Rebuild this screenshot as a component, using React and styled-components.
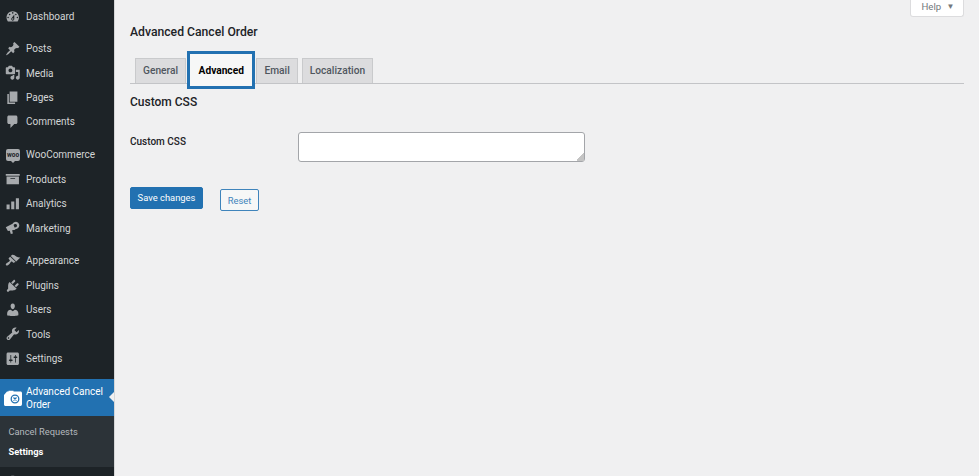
import React from 'react';
import styled, { createGlobalStyle } from 'styled-components';

const GlobalStyle = createGlobalStyle`
  html, body {
    margin: 0;
    height: 100%;
    overflow: hidden;
    background: #f0f0f1;
    font-family: Roboto, "Liberation Sans", sans-serif;
  }
`;

const icons = {
  dashboard: 'M3.76 16h12.48c1.1-1.37 1.76-3.11 1.76-5 0-4.42-3.58-8-8-8s-8 3.58-8 8c0 1.89.66 3.63 1.76 5zM10 4c.55 0 1 .45 1 1s-.45 1-1 1-1-.45-1-1 .45-1 1-1zM6 6c.55 0 1 .45 1 1s-.45 1-1 1-1-.45-1-1 .45-1 1-1zm8 0c.55 0 1 .45 1 1s-.45 1-1 1-1-.45-1-1 .45-1 1-1zm-5.37 5.55L12 7v6c0 1.1-.9 2-2 2s-2-.9-2-2c0-.57.24-1.08.63-1.45zM4 10c.55 0 1 .45 1 1s-.45 1-1 1-1-.45-1-1 .45-1 1-1zm12 0c.55 0 1 .45 1 1s-.45 1-1 1-1-.45-1-1 .45-1 1-1zm-5 3c0-.55-.45-1-1-1s-1 .45-1 1 .45 1 1 1 1-.45 1-1z',
  posts: 'M10.44 3.02l1.82-1.82 6.36 6.35-1.83 1.82c-1.05-.68-2.48-.57-3.41.36l-.75.75c-.92.93-1.04 2.35-.35 3.41l-1.83 1.82-2.41-2.41-2.8 2.79c-.42.42-3.38 2.71-3.8 2.29s1.86-3.39 2.28-3.81l2.79-2.79L4.1 9.36l1.83-1.82c1.05.69 2.48.57 3.4-.36l.75-.75c.93-.92 1.05-2.35.36-3.41z',
  media: 'M13 11V4c0-.55-.45-1-1-1h-1.67L9 1H5L3.67 3H2c-.55 0-1 .45-1 1v7c0 .55.45 1 1 1h10c.55 0 1-.45 1-1zM7 4.5c1.38 0 2.5 1.12 2.5 2.5S8.38 9.5 7 9.5 4.5 8.38 4.5 7 5.62 4.5 7 4.5zM14 6h5v10.5c0 1.38-1.12 2.5-2.5 2.5S14 17.88 14 16.5s1.12-2.5 2.5-2.5c.17 0 .34.02.5.05V9h-3V6zm-4 8.05V13h2v3.5c0 1.38-1.12 2.5-2.5 2.5S7 17.88 7 16.5 8.12 14 9.5 14c.17 0 .34.02.5.05z',
  pages: 'M6 15V2h10v13H6zm-1 1h8v2H3V5h2v11z',
  comments: 'M5 2h9c1.1 0 2 .9 2 2v7c0 1.1-.9 2-2 2h-2l-5 5v-5H5c-1.1 0-2-.9-2-2V4c0-1.1.9-2 2-2z',
  products: 'M19 4v2H1V4h18zM2 7h16v10H2V7zm11 3V9H7v1h6z',
  analytics: 'M2 11h4v6H2zM8 7h4v10H8zM14 3h4v14h-4z',
  marketing: 'M1 9.500 10.300 4.500l3.200 8-4.300.8 1 4-2.700.7-1.300-4.200-2.500.4zM11.800 3a4.500 4.500 0 1 1 3.600 8.200A4.500 4.500 0 0 1 11.800 3zm1 2.100a2.200 2.200 0 1 0 1.700 4 2.200 2.200 0 0 0-1.700-4z',
  appearance: 'M14.48 11.06L7.41 3.99l1.5-1.5c.5-.56 2.3-.47 3.51.32 1.21.8 1.43 1.28 2.91 2.1 1.18.64 2.45 1.26 4.45.85zm-.71.71L6.7 4.7 4.93 6.47c-.39.39-.39 1.02 0 1.41l1.06 1.06c.39.39.39 1.03 0 1.42-.6.6-1.43 1.11-2.21 1.69-.35.26-.7.53-1.01.84C1.43 13.23.4 14.84 1.4 15.84c.99 1 2.6-.03 3.94-1.38.31-.31.58-.66.85-1.02.57-.78 1.08-1.61 1.69-2.21.39-.39 1.02-.39 1.41 0l1.06 1.06c.39.39 1.02.39 1.41 0z',
  plugins: 'M13.11 4.36L9.87 7.6 8 5.73l3.24-3.24c.35-.34 1.05-.2 1.56.32.52.51.66 1.21.31 1.55zm-8 1.77l.91-1.12 9.01 9.01-1.19.84c-.71.71-2.63 1.16-3.82 1.16H6.14L4.9 17.26c-.59.59-1.54.59-2.12 0-.59-.58-.59-1.53 0-2.12l1.24-1.24v-3.88c0-1.13.4-3.19 1.09-3.89zm7.26 3.97l3.24-3.24c.34-.35 1.04-.21 1.55.31.52.51.66 1.21.31 1.55l-3.24 3.25z',
  users: 'M10 9.25c-2.27 0-2.73-3.44-2.73-3.44C7 4.02 7.82 2 9.97 2c2.16 0 2.98 2.02 2.71 3.81 0 0-.41 3.44-2.68 3.44zm0 2.57L12.72 10c2.39 0 4.52 2.33 4.52 4.53v2.49s-3.65 1.13-7.24 1.13c-3.65 0-7.24-1.13-7.24-1.13v-2.49c0-2.25 1.94-4.48 4.47-4.48z',
  tools: 'M16.68 9.77c-1.34 1.34-3.3 1.67-4.95.99l-5.41 6.52c-.99.99-2.59.99-3.58 0s-.99-2.59 0-3.57l6.52-5.42c-.68-1.65-.35-3.61.99-4.95 1.28-1.28 3.12-1.62 4.72-1.06l-2.89 2.89 2.82 2.82 2.86-2.87c.53 1.58.18 3.39-1.08 4.65zM3.81 16.21c.4.39 1.04.39 1.43 0 .4-.4.4-1.04 0-1.43-.39-.4-1.03-.4-1.43 0-.39.39-.39 1.03 0 1.43z',
  settings: 'M18 16V4c0-1.1-.9-2-2-2H4c-1.1 0-2 .9-2 2v12c0 1.1.9 2 2 2h12c1.1 0 2-.9 2-2zM8 11h1c.55 0 1 .45 1 1s-.45 1-1 1H8v1.5c0 .28-.22.5-.5.5s-.5-.22-.5-.5V13H6c-.55 0-1-.45-1-1s.45-1 1-1h1V5.5c0-.28.22-.5.5-.5s.5.22.5.5V11zm5-2h-1c-.55 0-1-.45-1-1s.45-1 1-1h1V5.5c0-.28.22-.5.5-.5s.5.22.5.5V7h1c.55 0 1 .45 1 1s-.45 1-1 1h-1v5.5c0 .28-.22.5-.5.5s-.5-.22-.5-.5V9z',
  collapse: 'M10 2.160c4.330 0 7.840 3.510 7.840 7.840s-3.510 7.840-7.840 7.840S2.160 14.330 2.160 10 5.670 2.160 10 2.160zM14 5l-8 5 8 5V5z',
};

const menuGroups = [
  [{ label: 'Dashboard', icon: 'dashboard' }],
  [
    { label: 'Posts', icon: 'posts' },
    { label: 'Media', icon: 'media' },
    { label: 'Pages', icon: 'pages' },
    { label: 'Comments', icon: 'comments' },
  ],
  [
    { label: 'WooCommerce', icon: 'woo' },
    { label: 'Products', icon: 'products' },
    { label: 'Analytics', icon: 'analytics' },
    { label: 'Marketing', icon: 'marketing' },
  ],
  [
    { label: 'Appearance', icon: 'appearance' },
    { label: 'Plugins', icon: 'plugins' },
    { label: 'Users', icon: 'users' },
    { label: 'Tools', icon: 'tools' },
    { label: 'Settings', icon: 'settings' },
  ],
];

const tabs = ['General', 'Advanced', 'Email', 'Localization'];

function MenuIcon({ name }) {
  if (name === 'woo') {
    return (
      <WooBadge>
        <WooText>woo</WooText>
      </WooBadge>
    );
  }
  return (
    <IconSvg viewBox="0 0 20 20">
      <path d={icons[name]} />
    </IconSvg>
  );
}

function App() {
  return (
    <Page>
      <GlobalStyle />
      <Sidebar>
        {menuGroups.map((group, i) => (
          <MenuGroup key={i}>
            {group.map((item) => (
              <MenuItem key={item.label}>
                <IconSlot>
                  <MenuIcon name={item.icon} />
                </IconSlot>
                <span>{item.label}</span>
              </MenuItem>
            ))}
          </MenuGroup>
        ))}
        <ActiveItem>
          <IconSlot>
            <svg width="18" height="16" viewBox="0 0 18 16">
              <path d="M3 1.500h1.500V.8h5v.7H16.500c.8 0 1.500.7 1.500 1.500v11c0 1.100-.7 2-1.500 2H1.500C.7 16 0 15.300 0 14.500V5z" fill="#fff" />
              <circle cx="11" cy="9" r="3.800" fill="none" stroke="#2271b1" strokeWidth="1.300" />
              <path d="M9.500 7.500l3 3M12.500 7.500l-3 3" stroke="#2271b1" strokeWidth="1.200" />
            </svg>
          </IconSlot>
          <ActiveLabel>Advanced Cancel Order</ActiveLabel>
          <ActiveArrow />
        </ActiveItem>
        <SubMenu>
          <SubItem>Cancel Requests</SubItem>
          <SubItem $current>Settings</SubItem>
        </SubMenu>
        <MenuItem>
          <IconSlot>
            <MenuIcon name="collapse" />
          </IconSlot>
          <span>Collapse menu</span>
        </MenuItem>
      </Sidebar>

      <Main>
        <HelpRow>
          <HelpTab>
            Help <HelpCaret>▼</HelpCaret>
          </HelpTab>
        </HelpRow>
        <PageTitle>Advanced Cancel Order</PageTitle>
        <TabBar>
          {tabs.map((tab) =>
            tab === 'Advanced' ? (
              <ActiveTab key={tab}>{tab}</ActiveTab>
            ) : (
              <Tab key={tab}>{tab}</Tab>
            ),
          )}
        </TabBar>
        <SectionTitle>Custom CSS</SectionTitle>
        <FormRow>
          <FieldLabel>Custom CSS</FieldLabel>
          <InputWrap>
            <CssInput />
          </InputWrap>
        </FormRow>
        <Actions>
          <SaveButton>Save changes</SaveButton>
          <ResetButton>Reset</ResetButton>
        </Actions>
      </Main>
    </Page>
  );
}

export default App;

// ----- sidebar
const Page = styled.div`
  display: flex;
  width: 979px;
  height: 476px;
  overflow: hidden;
  background: #f0f0f1;
`;

const Sidebar = styled.nav`
  flex: none;
  width: 114px;
  height: 476px;
  overflow: hidden;
  background: #1d2327;
  border-right: 1px solid #d5d6d7;
  padding-top: 4.400px;
  box-sizing: content-box;
`;

const MenuGroup = styled.div`
  margin-bottom: 8.400px;

  &:first-child {
    margin-bottom: 7.600px;
  }
`;

const MenuItem = styled.div`
  display: flex;
  align-items: center;
  height: 24.450px;
  color: #d3d5d6;
  font-size: 10px;
`;

const IconSlot = styled.span`
  flex: none;
  display: flex;
  align-items: center;
  justify-content: center;
  width: 26px;
`;

const IconSvg = styled.svg`
  width: 15.500px;
  height: 15.500px;
  fill: #a7aaad;
`;

const WooBadge = styled.span`
  position: relative;
  display: flex;
  align-items: center;
  justify-content: center;
  width: 14px;
  height: 12px;
  border-radius: 2px;
  background: #a7aaad;

  &::after {
    content: '';
    position: absolute;
    left: 5px;
    bottom: -2px;
    border: 2px solid transparent;
    border-top-color: #a7aaad;
    border-bottom-width: 0;
  }
`;

const WooText = styled.span`
  color: #1d2327;
  font-size: 6.500px;
  font-weight: 700;
  line-height: 1;
`;

const ActiveItem = styled.div`
  position: relative;
  display: flex;
  align-items: center;
  height: 37px;
  background: #2271b1;
  color: #fff;
  font-size: 10px;
  line-height: 13px;
`;

const ActiveLabel = styled.span`
  width: 84px;
`;

const ActiveArrow = styled.span`
  position: absolute;
  right: 0;
  top: 13px;
  border: 5.500px solid transparent;
  border-right-color: #f0f0f1;
  border-left-width: 0;
`;

const SubMenu = styled.div`
  height: 51px;
  padding: 6px 0 0 8.500px;
  box-sizing: border-box;
  margin-bottom: 2px;
  background: #2c3338;
`;

const SubItem = styled.div`
  height: 20px;
  line-height: 20px;
  font-size: 9.300px;
  color: ${(props) => (props.$current ? '#fff' : '#b4b9be')};
  font-weight: ${(props) => (props.$current ? 700 : 400)};
`;

// ----- contenu
const Main = styled.main`
  flex: 1;
  min-width: 0;
  padding: 0 15px;
  color: #1d2327;
`;

const HelpRow = styled.div`
  display: flex;
  justify-content: flex-end;
  height: 17px;
`;

const HelpTab = styled.div`
  width: 54px;
  height: 17px;
  padding-left: 2px;
  box-sizing: border-box;
  background: #fff;
  border: 1px solid #dcdcde;
  border-top: 0;
  border-radius: 0 0 3px 3px;
  color: #72777c;
  font-size: 9.600px;
  line-height: 13px;
  text-align: center;
`;

const HelpCaret = styled.span`
  font-size: 8px;
  margin-left: 3px;
  vertical-align: 1px;
`;

const PageTitle = styled.h1`
  margin: 8px 0 0;
  font-size: 12.200px;
  line-height: 14px;
  font-weight: 500;
  color: #1d2327;
`;

const TabBar = styled.div`
  display: flex;
  align-items: flex-end;
  gap: 4px;
  height: 44px;
  padding-left: 5px;
  border-bottom: 1px solid #c3c4c7;
`;

const Tab = styled.div`
  height: 25px;
  padding: 0 7px;
  background: #dcdcde;
  border: 1px solid #c9cacc;
  border-bottom: 0;
  box-sizing: border-box;
  color: #50575e;
  font-size: 10.200px;
  font-weight: 500;
  line-height: 24px;
`;

const ActiveTab = styled.div`
  height: 32px;
  margin-bottom: -3px;
  padding: 0 8.500px;
  background: #f6f7f7;
  outline: 3px solid #2271b1;
  box-sizing: border-box;
  color: #000;
  font-size: 10.200px;
  font-weight: 700;
  line-height: 33px;
`;

const SectionTitle = styled.h2`
  margin: 11px 0 0;
  font-size: 12px;
  line-height: 14px;
  font-weight: 500;
`;

const FormRow = styled.div`
  display: flex;
  align-items: flex-start;
  margin-top: 23px;
`;

const FieldLabel = styled.div`
  width: 168px;
  padding-top: 3px;
  font-size: 10px;
  line-height: 13px;
  font-weight: 500;
`;

const InputWrap = styled.div`
  position: relative;
  width: 287px;
  height: 30px;

  &::after {
    content: '';
    position: absolute;
    right: 1px;
    bottom: 1px;
    width: 8px;
    height: 8px;
    background: linear-gradient(135deg, transparent 50%, #c4c4c4 50%);
  }
`;

const CssInput = styled.textarea`
  display: block;
  width: 100%;
  height: 100%;
  margin: 0;
  padding: 0;
  box-sizing: border-box;
  background: #fff;
  border: 1px solid #a3a5a9;
  border-radius: 3px;
  resize: none;
`;

const Actions = styled.div`
  display: flex;
  align-items: flex-start;
  gap: 17px;
  margin-top: 25px;
`;

const SaveButton = styled.button`
  width: 73px;
  height: 22px;
  padding: 0 0 2px;
  background: #2271b1;
  border: 1px solid #2271b1;
  border-radius: 2px;
  color: #fff;
  font-family: inherit;
  font-size: 9.400px;
`;

const ResetButton = styled.button`
  width: 39px;
  height: 22px;
  margin-top: 2px;
  padding: 0;
  background: #f6f7f7;
  border: 1px solid #3f84bb;
  border-radius: 2px;
  color: #3f84bb;
  font-family: inherit;
  font-size: 9.400px;
`;
